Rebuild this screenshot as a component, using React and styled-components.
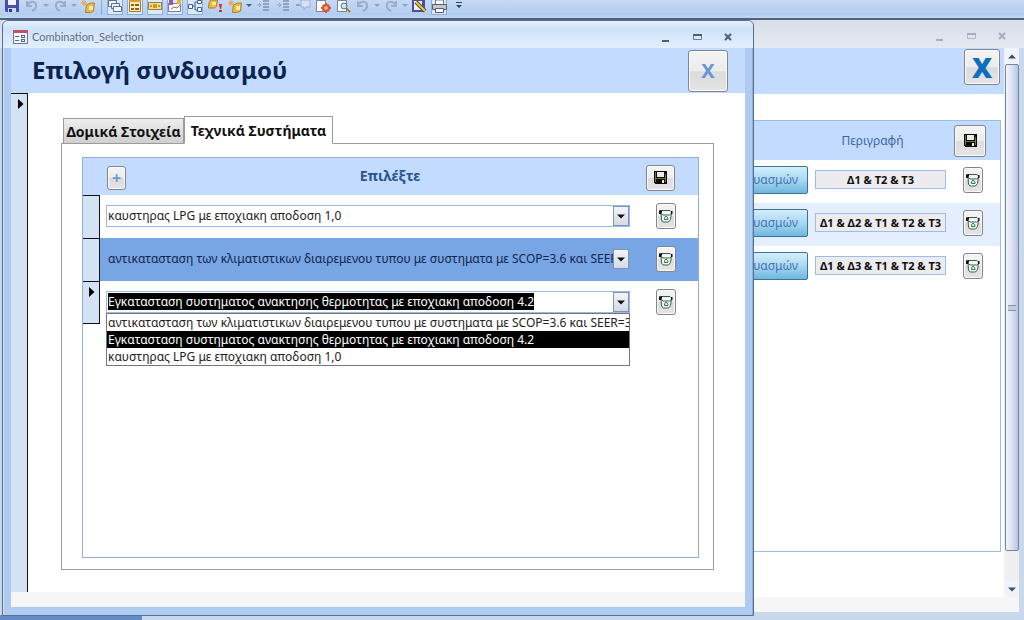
import React, { useEffect, useRef } from "react";
import styled, { createGlobalStyle, css } from "styled-components";

const Styles = createGlobalStyle`
  * {
    box-sizing: border-box;
  }

  body {
    margin: 0;
    font-family: "Noto Sans", sans-serif;
    font-size: 12px;
    overflow: hidden;
  }

  button,
  input,
  select {
    font: inherit;
    margin: 0;
    padding: 0;
  }
`;

const Shell = styled.div`
  background: #c9d8ea;
  display: flex;
  flex-direction: column;
  height: 100vh;
  overflow: hidden;
`;

const Toolbar = styled.div`
  align-items: flex-start;
  background: linear-gradient(#c6d9f3, #b3cdf0 80%, #c3d8f3);
  border-bottom: 2px solid #53627c;
  display: flex;
  flex: none;
  gap: 4px;
  height: 20px;
  padding-left: 4px;
`;

const ToolButton = styled.button`
  background: ${({ on }) => (on ? "#dce9fa" : "none")};
  border: ${({ on }) => (on ? "1px solid #8facd5" : "1px solid transparent")};
  border-top: 0;
  display: flex;
  flex: none;
  height: 15px;
  justify-content: center;
  opacity: ${({ dim }) => (dim ? 0.4 : 1)};
  width: ${({ narrow }) => (narrow ? 4 : 16)}px;

  svg {
    flex: none;
  }
`;

const Divider = styled.span`
  border-left: 1px solid #8facd5;
  height: 15px;
  margin: 0 1px;
`;

const Desktop = styled.div`
  background: #c9d8ea;
  flex: 1;
  min-height: 0;
  position: relative;
`;

const Taskbar = styled.div`
  background: #638cc7;
  bottom: 0;
  height: 5px;
  left: 0;
  position: absolute;
  width: 142px;
`;

const BackWindow = styled.section`
  display: flex;
  flex-direction: column;
  height: 100%;
  padding: 0 5px 8px 8px;
`;

// the dialog floats over the form behind it
const FrontWindow = styled.section`
  background: #aeccf2;
  border: 1px solid #566f93;
  border-radius: 6px 6px 0 0;
  bottom: 4px;
  box-shadow: inset 1px 0 #cfe1fa, inset -1px 0 #8fb0df;
  display: flex;
  flex-direction: column;
  left: 2px;
  padding: 0 8px 8px;
  position: absolute;
  right: 270px;
  top: 0;
`;

const TitleBar = styled.header`
  align-items: center;
  background: ${({ inactive }) =>
    inactive
      ? "linear-gradient(#d8dfe9, #e4e9f1)"
      : "linear-gradient(#e6f0fd, #cfe1f9 30%, #e3effe)"};
  border-radius: 5px 5px 0 0;
  color: #5f6f86;
  display: flex;
  flex: none;
  font-family: Lato, "Noto Sans", sans-serif;
  font-size: 11px;
  gap: 4px;
  height: ${({ inactive }) => (inactive ? 28 : 27)}px;
  margin: 0 -8px;
  padding: 4px 17px 0 10px;
`;

const WindowControls = styled.div`
  display: flex;
  gap: 15px;
  margin-left: auto;
  opacity: ${({ inactive }) => (inactive ? 0.4 : 1)};
`;

const ControlButton = styled.button`
  background: none;
  border: 0;
  display: flex;
  height: 16px;
  width: 16px;
`;

const FormHeader = styled.div`
  align-items: center;
  background: #c2dbff;
  display: flex;
  flex: none;
  height: ${({ tall }) => (tall ? 46 : 45)}px;
  justify-content: space-between;
  padding: ${({ tall }) => (tall ? "0 4px 8px 0" : "0 17px 0 21px")};
`;

const Heading = styled.h1`
  color: #0a2350;
  font-size: 24px;
  line-height: 28px;
  margin: 0;
  padding-bottom: 2px;
`;

const raised = css`
  align-items: center;
  background: linear-gradient(#f4f4f4, #ececec 50%, #dcdcdc 52%, #e4e4e4);
  border: 1px solid #80858e;
  border-radius: 3px;
  box-shadow: inset 0 0 0 1px #fafafa;
  display: flex;
  flex: none;
  justify-content: center;
`;

const CloseButton = styled.button`
  ${raised}
  color: ${({ strong }) => (strong ? "#0d6fbd" : "#6b96d6")};
  font-size: ${({ strong }) => (strong ? 28 : 20)}px;
  font-weight: ${({ strong }) => (strong ? 900 : 700)};
  height: ${({ strong }) => (strong ? 36 : 42)}px;
  line-height: 28px;
  margin-left: auto;
  width: ${({ strong }) => (strong ? 36 : 40)}px;
`;

const SaveButton = styled.button`
  ${raised}
  height: ${({ large }) => (large ? 32 : 26)}px;
  width: ${({ large }) => (large ? 32 : 29)}px;
`;

const AddButton = styled.button`
  ${raised}
  color: #6b9bd8;
  font-size: 16px;
  font-weight: 700;
  height: 24px;
  line-height: 20px;
  width: 19px;
`;

const DeleteButton = styled.button`
  ${raised}
  height: 26px;
  width: 20px;

  svg {
    flex: none;
  }
`;

const FormBody = styled.div`
  background: #fff;
  display: flex;
  flex: 1;
  min-height: 0;
`;

const RecordBar = styled.div`
  background: #d3e3f3;
  border-right: 1px solid #111;
  border-top: 1px solid #111;
  flex: none;
  padding: 2px 0 0 7px;
  width: 17px;
`;

const StatusStrip = styled.div`
  background: #f6f6f6;
  flex: none;
  height: 15px;
`;

const TabArea = styled.div`
  display: flex;
  flex: 1;
  flex-direction: column;
  margin: 23px 31px 22px 33px;
  min-width: 0;
`;

const TabList = styled.div`
  align-items: flex-end;
  display: flex;
  margin-bottom: -1px;
  padding-left: 2px;
`;

const Tab = styled.button`
  background: ${({ active }) =>
    active ? "#fff" : "linear-gradient(#eee, #cfcfcf)"};
  border: 1px solid #9b9b9b;
  border-bottom-color: ${({ active }) => (active ? "#fff" : "#9b9b9b")};
  color: #111;
  font-size: 14px;
  font-weight: 700;
  height: ${({ active }) => (active ? 28 : 26)}px;
  position: relative;
  white-space: nowrap;
  width: ${({ active }) => (active ? 149 : 121)}px;
`;

const TabPanel = styled.div`
  border: 1px solid #9b9b9b;
  display: flex;
  flex: 1;
  padding: 13px 14px 11px 20px;
`;

const Subform = styled.div`
  border: 1px solid #8fb0dc;
  flex: 1;
  min-width: 0;
`;

const SubformHeader = styled.div`
  align-items: center;
  background: #c2dbff;
  display: flex;
  height: 37px;
  justify-content: space-between;
  padding: 2px 23px 0 24px;
`;

const ColumnTitle = styled.h2`
  color: #2c5490;
  font-size: 14px;
  line-height: 20px;
  margin: 0;
  padding: 0 0 4px 8px;
`;

const Record = styled.div`
  background: ${({ selected }) => (selected ? "#78a5e3" : "#fff")};
  display: flex;
  height: 43px;
`;

const Selector = styled.div`
  background: #d3e3f3;
  border: 1px solid #111;
  border-left: 0;
  border-bottom-width: ${({ last }) => (last ? 1 : 0)}px;
  flex: none;
  padding: 2px 0 0 6px;
  width: 17px;
`;

const RecordCells = styled.div`
  align-items: flex-start;
  display: flex;
  flex: 1;
  justify-content: space-between;
  min-width: 0;
  padding: 8px 22px 0 6px;
`;

const Combo = styled.div`
  background: ${({ bare }) => (bare ? "transparent" : "#fff")};
  border: 1px solid ${({ bare }) => (bare ? "transparent" : "#9cb8e4")};
  display: flex;
  flex: 1;
  height: 22px;
  margin: 2px 26px 0 0;
  min-width: 0;
  position: relative;
`;

const field = css`
  background: none;
  border: 0;
  color: ${({ bare }) => (bare ? "#10254f" : "#222")};
  flex: 1;
  height: 18px;
  min-width: 0;
  outline: 0;
  padding: 0 0 0 1px;
`;

const ComboSelect = styled.select`
  ${field}
  appearance: none;
  text-overflow: clip;
`;

const ComboInput = styled.input`
  ${field}

  &::selection {
    background: #000;
    color: #fff;
  }
`;

const ComboArrow = styled.button`
  align-items: center;
  background: linear-gradient(#f2f5fa, #d5dae4);
  border: 1px solid #7f93b4;
  display: flex;
  flex: none;
  justify-content: center;
  width: 16px;
`;

const OptionList = styled.ul`
  background: #fff;
  border: 1px solid #777;
  left: -1px;
  list-style: none;
  margin: 0;
  overflow: hidden;
  padding: 0;
  position: absolute;
  right: -1px;
  top: 21px;
  z-index: 2;
`;

const Option = styled.li`
  background: ${({ chosen }) => (chosen ? "#000" : "#fff")};
  color: ${({ chosen }) => (chosen ? "#fff" : "#222")};
  height: 17px;
  line-height: 17px;
  padding-left: 1px;
  white-space: nowrap;
`;

const BackColumn = styled.div`
  background: #fff;
  display: flex;
  flex: 1;
  flex-direction: column;
`;

const BackSubform = styled.div`
  border: 1px solid #9dbce9;
  flex: 1;
  margin: 26px 3px 45px 0;
`;

const BackSubformHeader = styled.div`
  align-items: center;
  background: #c2dbff;
  color: #3c66a4;
  display: flex;
  gap: 9px;
  height: 39px;
  justify-content: flex-end;
  padding-right: 14px;
`;

const Description = styled.span`
  text-align: center;
  width: 145px;
`;

const BackRow = styled.div`
  align-items: center;
  background: ${({ shaded }) => (shaded ? "#e4eeff" : "#fff")};
  display: flex;
  height: 43px;
  justify-content: flex-end;
  padding: 0 17px 4px 0;
`;

const BlueButton = styled.button`
  background: linear-gradient(#d4eefb, #a8d8f2 50%, #6fb6de);
  border: 1px solid #39729c;
  border-radius: 2px;
  color: #4674b2;
  height: 28px;
  margin-right: 7px;
  padding-right: 9px;
  text-align: right;
  width: 150px;
`;

const DescriptionField = styled.input`
  background: #ececee;
  border: 1px solid #9dbce9;
  color: #111;
  font-size: 11px;
  font-weight: 700;
  height: 19px;
  margin-right: 17px;
  text-align: center;
  width: 131px;
`;

const ScrollTrack = styled.div`
  align-items: center;
  background: #f0f0f2;
  display: flex;
  flex: none;
  flex-direction: column;
  width: 15px;
`;

const ScrollButton = styled.button`
  align-items: center;
  background: #f0f4fa;
  border: 0;
  display: flex;
  height: 16px;
  justify-content: center;
  width: 15px;
`;

const ScrollThumb = styled.div`
  align-items: center;
  background: linear-gradient(90deg, #f2f6fb, #dde5f1 45%, #b7c5de);
  border: 1px solid #6f86ab;
  border-radius: 2px;
  display: flex;
  flex: 1;
  justify-content: center;
  margin-bottom: 30px;
  width: 14px;
`;

const Grip = styled.span`
  background: #c5ccd8;
  border-bottom: 1px solid #8b95a5;
  border-top: 1px solid #8b95a5;
  height: 6px;
  width: 8px;
`;

const Floppy = () => (
  <svg width="13" height="13" viewBox="0 0 13 13" shapeRendering="crispEdges">
    <path d="M0 0h13v13H1L0 12z" fill="#0b0b05" />
    <path d="M1 1h1v10H1zM11 3h1v8h-1zM2 7h9v1H2z" fill="#77752b" />
    <path d="M3 1h7v5H3z" fill="#ececec" />
    <path d="M8 9h2v3H8z" fill="#ececec" />
  </svg>
);

const Bin = () => (
  <svg width="14" height="14" viewBox="0 0 14 14" fill="none">
    <path d="M2 3.500l10-1 .5 2-1 6.500-2 2.500H4L2.500 11z" fill="#f4faf5" />
    <path
      d="M2 4l.5 7L4 13h5.500l2-2.500L12.500 4M2 4.500l2 1.500h6.500l2-1.500V3L11 1.500H3"
      stroke="#3f5a48"
    />
    <path d="M0 1.500L3 1v2L2 5H0z" fill="#14100f" />
    <path d="M12 2h1.500v3H12z" fill="#14100f" />
    <path d="M5.500 10.500v-1.500l1.500-2 2 2v1.500z" stroke="#218049" />
  </svg>
);

const Pointer = () => (
  <svg width="6" height="10" viewBox="0 0 6 10">
    <path d="M0 0l5.500 5L0 10z" fill="#000" />
  </svg>
);

const Arrow = ({ up, color = "#111" }) => (
  <svg width="8" height="5" viewBox="0 0 8 5">
    <path d={up ? "M0 4.500L4 .5l4 4z" : "M0 .5h8l-4 4z"} fill={color} />
  </svg>
);

const FormIcon = () => (
  <svg width="15" height="14" viewBox="0 0 15 14" shapeRendering="crispEdges">
    <path d="M.5 1.500h14v12H.5z" fill="#f5f8fd" stroke="#66789c" />
    <path d="M0 0h15v3H0z" fill="#ba5567" />
    <path d="M2 6h4v1H2zM2 10h4v1H2z" fill="#50648c" />
    <path d="M8.500 5.500h3v2h-3zM8.500 9.500h3v2h-3z" stroke="#50648c" fill="#fff" />
  </svg>
);

const Controls = ({ inactive }) => (
  <WindowControls inactive={inactive ? 1 : undefined}>
    <ControlButton aria-label="Minimize">
      <svg width="16" height="16">
        <path d="M4 11h7v2H4z" fill="#4c5e7c" />
      </svg>
    </ControlButton>
    <ControlButton aria-label="Maximize">
      <svg width="16" height="16">
        <path d="M4.500 5.500h8v5h-8z" fill="none" stroke="#6b7b96" />
        <path d="M4 5h9v2H4z" fill="#4c5e7c" />
      </svg>
    </ControlButton>
    <ControlButton aria-label="Close">
      <svg width="16" height="16">
        <path
          d="M5 5l6 6m0-6l-6 6"
          fill="none"
          stroke="#4c5e7c"
          strokeWidth="2"
        />
      </svg>
    </ControlButton>
  </WindowControls>
);

const toolIcons = {
  save: (
    <>
      <path d="M1 0h14v12H2l-1-1z" fill="#4450b0" />
      <path d="M4 0h8v5H4z" fill="#eef3ff" />
      <path d="M4 8h8v4H4z" fill="#cdd6ef" />
      <path d="M5 9h3v3H5z" fill="#303a7c" />
    </>
  ),
  undo: (
    <path
      d="M3 1v5h5M3 5c3-5 10-4 9 1 0 2-2 4-4 5"
      fill="none"
      stroke="#5f7599"
      strokeWidth="2"
    />
  ),
  redo: (
    <path
      d="M13 1v5H8M13 5C10 0 3 1 4 6c0 2 2 4 4 5"
      fill="none"
      stroke="#5f7599"
      strokeWidth="2"
    />
  ),
  caret: <path d="M5 4h6L8 7z" fill="#405b8c" />,
  design: (
    <>
      <path d="M6.500 5l4-2h4l-1 8-3 1.500h-5L6 8z" fill="#edb93f" stroke="#a8832e" />
      <path d="M9 6h4v4H9z" fill="#ffe9a0" />
      <path d="M4 0v6M1 3h6M2 1l4 4m0-4L2 5" stroke="#e9a24b" />
    </>
  ),
  windows: (
    <>
      <path d="M1.500.5h8v6h-8z" fill="#fff" stroke="#5470a3" />
      <path d="M4.500 3.500h8v5h-8z" fill="#e6eefb" stroke="#5470a3" />
      <path d="M6.500 6.500h8v5h-8z" fill="#fff" stroke="#5470a3" />
    </>
  ),
  form: (
    <>
      <path d="M2.500.5h11v11h-11z" fill="#fff0b5" stroke="#a57b24" />
      <path d="M2 0h12v2H2z" fill="#df9b33" />
      <path d="M4 5h3M4 9h3M8 5h4M8 9h4" stroke="#8b631e" strokeWidth="2" />
    </>
  ),
  macro: (
    <>
      <path d="M1.500 2.500h13v7h-13z" fill="#f8dd82" stroke="#967d45" />
      <path d="M6 4h4v4H6z" fill="#d89525" />
      <path d="M3 6h2m6 0h2" stroke="#555" />
    </>
  ),
  wizard: (
    <>
      <path d="M1.500 3.500h12v8h-12z" fill="#fff" stroke="#7479a9" />
      <path d="M2 0h4v5H2z" fill="#9456b9" />
      <path d="M10 0h4v4h-4z" fill="#ebb12e" />
      <path d="M4 9l3-2 3 1 3-3" fill="none" stroke="#c75b55" />
    </>
  ),
  relations: (
    <>
      <path d="M5 6h3V2h3M8 6v4h3" fill="none" stroke="#425e92" />
      <path
        d="M1.500 4.500h4v4h-4zM10.500.5h4v3h-4zM10.500 7.500h4v4h-4z"
        fill="#fff"
        stroke="#425e92"
      />
    </>
  ),
  alert: (
    <>
      <path d="M3.500 0h7l-1 6.500-2 1.500h-6L2 3z" fill="#edb93f" stroke="#a8832e" />
      <path d="M5 2h4v3H5z" fill="#ffe9a0" />
      <path d="M12 4h3l-1 5h-1zM12 10h3v2h-3z" fill="#d4292a" />
    </>
  ),
  indent: (
    <>
      <path d="M8 1h6M8 4h6M8 7h6M8 10h6" stroke="#405b8c" strokeWidth="2" />
      <path d="M2 5h4M4 3l2 2-2 2" stroke="#405b8c" fill="none" />
    </>
  ),
  note: (
    <>
      <path d="M6 0h9v7h-4l-2 3V7H6z" fill="#eef3ff" stroke="#667ba2" />
      <path d="M1 5h4" stroke="#405b8c" strokeWidth="2" />
    </>
  ),
  gear: (
    <>
      <path d="M1.500.5h9v11h-9z" fill="#fff" stroke="#7583a4" />
      <circle cx="11" cy="8" r="3" fill="#f3af80" stroke="#d75635" strokeWidth="2" />
      <path
        d="M11 3v2m0 6v2M6 8h2m6 0h2M8 5l1 1m4 4l1 1m0-6l-1 1M9 10l-1 1"
        stroke="#d75635"
        strokeWidth="2"
      />
    </>
  ),
  find: (
    <>
      <path d="M2.500.5h9v11h-9z" fill="#fff" stroke="#7583a4" />
      <circle cx="9" cy="6" r="3" fill="#c8e3f8" stroke="#5a7089" />
      <path d="M11 8l4 4" stroke="#a57e25" strokeWidth="2" />
    </>
  ),
  edit: (
    <>
      <path d="M1 0h13v12H1z" fill="#504da9" />
      <path d="M3 1h8v9H3z" fill="#eef3ff" />
      <path d="M5 2l9 9" stroke="#594b25" strokeWidth="4" />
      <path d="M5 2l9 9" stroke="#e7cc45" strokeWidth="2" />
    </>
  ),
  print: (
    <>
      <path d="M4.500 0h8v5h-8z" fill="#fff" stroke="#737987" />
      <path d="M1.500 4.500h14v5h-14z" fill="#c3c7cf" stroke="#555d6c" />
      <path d="M4.500 8.500h8v4h-8z" fill="#fff" stroke="#555d6c" />
    </>
  ),
  more: <path d="M5 2h6v1H5zM5 5h6L8 8z" fill="#24477f" />
};

const tools = [
  { icon: "save" },
  { icon: "undo", dim: true },
  { icon: "caret", dim: true, narrow: true },
  { icon: "redo", dim: true },
  { icon: "caret", dim: true, narrow: true },
  { icon: "design" },
  "|",
  { icon: "windows", on: true },
  { icon: "form", on: true },
  { icon: "macro", on: true },
  { icon: "wizard", on: true },
  { icon: "relations", on: true },
  { icon: "alert" },
  { icon: "design" },
  { icon: "caret", narrow: true },
  { icon: "indent", dim: true },
  { icon: "indent", dim: true },
  { icon: "note", dim: true },
  { icon: "gear" },
  { icon: "find" },
  { icon: "undo", dim: true },
  { icon: "caret", dim: true, narrow: true },
  { icon: "redo", dim: true },
  { icon: "caret", dim: true, narrow: true },
  { icon: "edit" },
  { icon: "print", on: true },
  { icon: "more" }
];

const options = [
  "αντικατασταση των κλιματιστικων διαιρεμενου τυπου με συστηματα με SCOP=3.6 και SEER=3.",
  "Εγκατασταση συστηματος ανακτησης θερμοτητας με εποχιακη αποδοση 4.2",
  "καυστηρας LPG με εποχιακη αποδοση 1,0"
];

const combinations = [
  "Δ1 & Τ2 & Τ3",
  "Δ1 & Δ2 & Τ1 & Τ2 & Τ3",
  "Δ1 & Δ3 & Τ1 & Τ2 & Τ3"
];

const ClosedCombo = ({ value, bare }) => (
  <Combo bare={bare ? 1 : undefined}>
    <ComboSelect
      aria-label="Επιλέξτε"
      bare={bare ? 1 : undefined}
      defaultValue={value}
    >
      {options.map(option => (
        <option key={option}>{option}</option>
      ))}
    </ComboSelect>
    <ComboArrow tabIndex={-1} aria-label="Άνοιγμα">
      <Arrow />
    </ComboArrow>
  </Combo>
);

const OpenCombo = ({ value }) => {
  const input = useRef(null);

  useEffect(() => {
    input.current.focus();
    input.current.select();
  }, []);

  return (
    <Combo>
      <ComboInput
        ref={input}
        role="combobox"
        aria-label="Επιλέξτε"
        aria-expanded="true"
        aria-controls="systems"
        defaultValue={value}
      />
      <ComboArrow tabIndex={-1} aria-label="Κλείσιμο">
        <Arrow />
      </ComboArrow>
      <OptionList id="systems" role="listbox">
        {options.map(option => (
          <Option
            key={option}
            role="option"
            aria-selected={option === value}
            chosen={option === value ? 1 : undefined}
          >
            {option}
          </Option>
        ))}
      </OptionList>
    </Combo>
  );
};

const SystemRecord = ({ selected, current, children }) => (
  <Record selected={selected}>
    <Selector last={current ? 1 : undefined}>{current && <Pointer />}</Selector>
    <RecordCells>
      {children}
      <DeleteButton aria-label="Διαγραφή">
        <Bin />
      </DeleteButton>
    </RecordCells>
  </Record>
);

const App = () => (
  <>
    <Styles />
    <Shell>
      <Toolbar role="toolbar">
        {tools.map((tool, i) =>
          tool === "|" ? (
            <Divider key={i} />
          ) : (
            <ToolButton
              key={i}
              aria-label={tool.icon}
              on={tool.on ? 1 : undefined}
              dim={tool.dim ? 1 : undefined}
              narrow={tool.narrow ? 1 : undefined}
            >
              <svg width="16" height="13" viewBox="0 0 16 13">
                {toolIcons[tool.icon]}
              </svg>
            </ToolButton>
          )
        )}
      </Toolbar>
      <Desktop>
        <BackWindow>
          <TitleBar inactive={1}>
            <Controls inactive />
          </TitleBar>
          <FormBody>
            <BackColumn>
              <FormHeader tall={1}>
                <CloseButton strong={1}>X</CloseButton>
              </FormHeader>
              <BackSubform>
                <BackSubformHeader>
                  <Description>Περιγραφή</Description>
                  <SaveButton large={1} aria-label="Αποθήκευση">
                    <Floppy />
                  </SaveButton>
                </BackSubformHeader>
                {combinations.map((text, i) => (
                  <BackRow key={text} shaded={i === 1 ? 1 : undefined}>
                    <BlueButton>υασμών</BlueButton>
                    <DescriptionField
                      aria-label="Περιγραφή"
                      defaultValue={text}
                    />
                    <DeleteButton aria-label="Διαγραφή">
                      <Bin />
                    </DeleteButton>
                  </BackRow>
                ))}
              </BackSubform>
            </BackColumn>
            <ScrollTrack>
              <ScrollButton aria-label="Πάνω">
                <Arrow up color="#3e4d66" />
              </ScrollButton>
              <ScrollThumb>
                <Grip />
              </ScrollThumb>
              <ScrollButton aria-label="Κάτω">
                <Arrow color="#3e4d66" />
              </ScrollButton>
            </ScrollTrack>
          </FormBody>
          <StatusStrip />
        </BackWindow>
        <Taskbar />
        <FrontWindow>
          <TitleBar>
            <FormIcon />
            Combination_Selection
            <Controls />
          </TitleBar>
          <FormHeader>
            <Heading>Επιλογή συνδυασμού</Heading>
            <CloseButton>X</CloseButton>
          </FormHeader>
          <FormBody>
            <RecordBar>
              <Pointer />
            </RecordBar>
            <TabArea>
              <TabList role="tablist">
                <Tab role="tab">Δομικά Στοιχεία</Tab>
                <Tab role="tab" aria-selected="true" active={1}>
                  Τεχνικά Συστήματα
                </Tab>
              </TabList>
              <TabPanel role="tabpanel">
                <Subform>
                  <SubformHeader>
                    <AddButton>+</AddButton>
                    <ColumnTitle>Επιλέξτε</ColumnTitle>
                    <SaveButton aria-label="Αποθήκευση">
                      <Floppy />
                    </SaveButton>
                  </SubformHeader>
                  <SystemRecord>
                    <ClosedCombo value={options[2]} />
                  </SystemRecord>
                  <SystemRecord selected={1}>
                    <ClosedCombo value={options[0]} bare />
                  </SystemRecord>
                  <SystemRecord current>
                    <OpenCombo value={options[1]} />
                  </SystemRecord>
                </Subform>
              </TabPanel>
            </TabArea>
          </FormBody>
          <StatusStrip />
        </FrontWindow>
      </Desktop>
    </Shell>
  </>
);

export default App;
